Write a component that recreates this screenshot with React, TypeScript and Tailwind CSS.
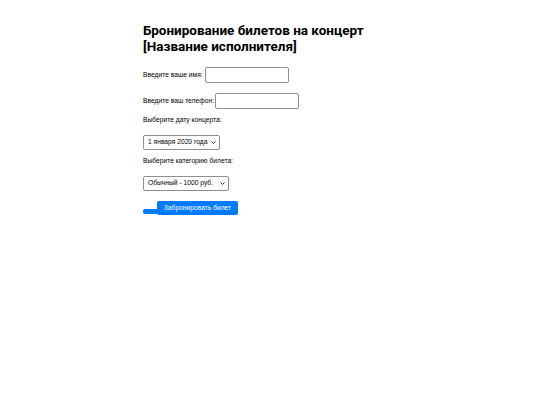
import React from 'react';

const Chevron = () => (
    <svg viewBox="0 0 10 6" className="w-[5px] h-[3px] shrink-0" fill="none" stroke="#222" strokeWidth="1.8">
        <path d="M1 1l4 4 4-4" />
    </svg>
);

const App = () => {
    return (
        <div className="min-h-[405px] bg-white">
            <div className="mx-auto w-[254px] pt-[22px] text-black">
                <h1 className="text-[13.5px] font-bold leading-[16px]" style={{ fontFamily: 'Roboto, sans-serif' }}>
                    Бронирование билетов на концерт [Название исполнителя]
                </h1>
                <form className="mt-[13px] flex flex-col text-[6.7px] text-black whitespace-nowrap" style={{ fontFamily: '"Liberation Sans", Arial, sans-serif' }}>
                    <div className="flex items-center h-[16px]">
                        <label>Введите ваше имя:</label>
                        <input type="text" className="ml-[2px] h-[16px] w-[84px] border border-[#8f8f8f] rounded-[2px]" />
                    </div>
                    <div className="mt-[10px] flex items-center h-[16px]">
                        <label>Введите ваш телефон:</label>
                        <input type="tel" className="ml-[1px] h-[16px] w-[84px] border border-[#8f8f8f] rounded-[2px]" />
                    </div>
                    <label className="mt-[6px] leading-[10px]">Выберите дату концерта:</label>
                    <div className="mt-[10px] flex items-center justify-between h-[15px] w-[77px] border border-[#8f8f8f] rounded-[2px] pl-[4px] pr-[3px]">
                        <span>1 января 2020 года</span>
                        <Chevron />
                    </div>
                    <label className="mt-[6px] leading-[10px]">Выберите категорию билета:</label>
                    <div className="mt-[10px] flex items-center justify-between h-[15px] w-[86px] border border-[#8f8f8f] rounded-[2px] pl-[4px] pr-[3px]">
                        <span>Обычный - 1000 руб.</span>
                        <Chevron />
                    </div>
                    <div className="mt-[10px] flex items-center">
                        <div className="h-[5px] w-[14px] mt-[6px] bg-[#007bff] rounded-l-[2px]" />
                        <button type="button" className="h-[14px] w-[81px] bg-[#007bff] text-white rounded-[2px] text-[6.7px]">
                            Забронировать билет
                        </button>
                    </div>
                </form>
            </div>
        </div>
    );
};

export default App;
